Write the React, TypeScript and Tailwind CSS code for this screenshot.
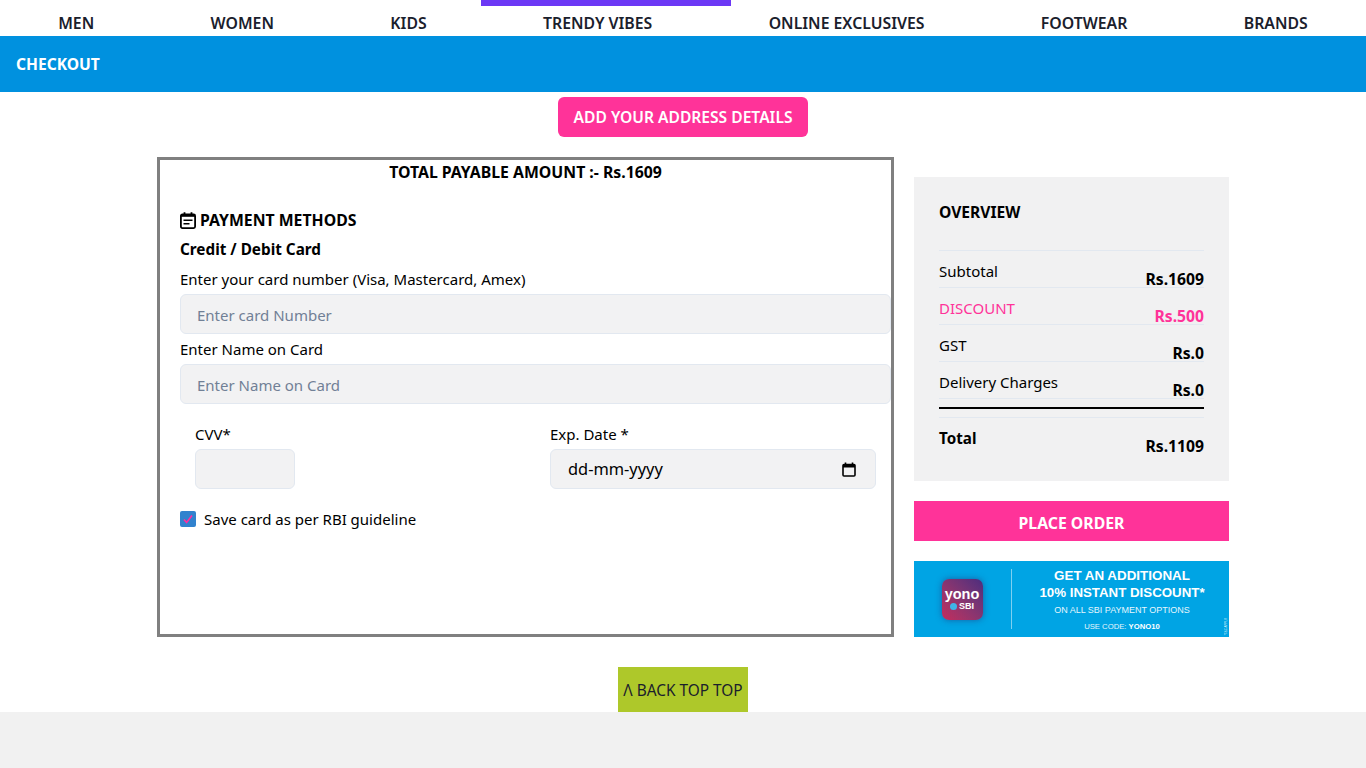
import React from "react";

const NAV = ["MEN", "WOMEN", "KIDS", "TRENDY VIBES", "ONLINE EXCLUSIVES", "FOOTWEAR", "BRANDS"];
const ROWS = [
  { label: "Subtotal", value: "Rs.1609", pink: false },
  { label: "DISCOUNT", value: "Rs.500", pink: true },
  { label: "GST", value: "Rs.0", pink: false },
  { label: "Delivery Charges", value: "Rs.0", pink: false },
];

function PaymentIcon() {
  return (
    <svg width="16" height="17" viewBox="0 0 16 17" fill="none" stroke="#000" strokeWidth="1.8" className="mt-[4px] shrink-0">
      <rect x="0.9" y="2.4" width="14.2" height="13.7" rx="1.5" />
      <path d="M4.5 0.3V3M11.5 0.3V3" />
      <path d="M0.9 3.6H15.1" strokeWidth="2.4" />
      <path d="M3.5 8.3H12.5M3.5 11.7H9.5" strokeWidth="1.6" />
    </svg>
  );
}

function CalendarIcon() {
  return (
    <svg width="14" height="15" viewBox="0 0 14 15" fill="none" className="shrink-0">
      <rect x="1" y="2.5" width="12" height="11.5" rx="1" stroke="#000" strokeWidth="1.6" />
      <rect x="1" y="2.5" width="12" height="3" fill="#000" />
      <path d="M3.5 0.5V3M10.5 0.5V3" stroke="#000" strokeWidth="1.6" />
    </svg>
  );
}

function Banner() {
  return (
    <div className="relative mt-5 flex h-[76px] w-full bg-[#00a4e4] font-['Liberation_Sans',sans-serif] text-white">
      <div className="flex w-[97px] shrink-0 items-center justify-center pr-[1px]">
        <div className="flex h-[41px] w-[41px] flex-col items-center justify-center rounded-[7px] bg-gradient-to-tr from-[#c42a5c] to-[#4c2c7e] shadow-[0_0_6px_rgba(40,40,110,0.55)]">
          <span className="text-[14.5px] font-bold leading-[14px]">yono</span>
          <span className="flex items-center gap-[2px] text-[9px] font-bold leading-[11px]">
            <span className="h-[7px] w-[7px] rounded-full bg-[#3fb4e8]" />
            SBI
          </span>
        </div>
      </div>
      <div className="my-[8px] w-px bg-[#7fd0f0]" />
      <div className="flex flex-1 flex-col items-center pl-[3px] pt-[6px]">
        <span className="text-[13.4px] font-bold leading-[17px]">GET AN ADDITIONAL</span>
        <span className="text-[13.3px] font-bold leading-[17px]">10% INSTANT DISCOUNT*</span>
        <span className="mt-[3px] text-[9px] leading-[12px] text-[#e6f6fd]">ON ALL SBI PAYMENT OPTIONS</span>
        <span className="mt-[6px] text-[7.7px] leading-[10px] text-[#e6f6fd]">
          USE CODE: <b className="text-white">YONO10</b>
        </span>
      </div>
      <span className="absolute bottom-[2px] right-[1px] rotate-180 text-[3px] leading-[4px] text-[#cdeefb] [writing-mode:vertical-rl]">
        *T&amp;C APPLY
      </span>
    </div>
  );
}

export default function App() {
  return (
    <div className="min-h-[768px] bg-white font-['Noto_Sans',sans-serif] text-[15px] leading-6 text-black">
      <div className="relative flex h-9 items-end justify-around pb-[1px] text-[15.8px] text-[#1a202c]">
        <div className="absolute left-[481px] top-0 h-[6px] w-[250px] bg-[#6c38f5]" />
        {NAV.map((n) => (
          <span key={n} className="font-semibold leading-6">{n}</span>
        ))}
      </div>

      <div className="flex h-14 items-center bg-[#0091df] px-4 text-[15.6px] font-bold text-white">CHECKOUT</div>

      <div className="mt-[5px] flex justify-center">
        <button className="flex h-10 w-[250px] items-center justify-center rounded-md bg-[#ff3399] text-[15.6px] font-semibold text-white">
          ADD YOUR ADDRESS DETAILS
        </button>
      </div>

      <div className="mt-5 flex items-start justify-center gap-5 pl-5">
        <div className="h-[480px] w-[737px] border-[3px] border-[#808080] px-5">
          <div className="h-[24px] text-center text-[15.8px] font-bold">TOTAL PAYABLE AMOUNT :- Rs.1609</div>
          <div className="mt-[24px] flex items-start gap-1">
            <PaymentIcon />
            <span className="text-[15.8px] font-bold">PAYMENT METHODS</span>
          </div>
          <div className="mt-[5px] text-[15.3px] font-bold">Credit / Debit Card</div>
          <div className="mt-[6px] h-[27px] leading-[25px]">Enter your card number (Visa, Mastercard, Amex)</div>
          <input
            placeholder="Enter card Number"
            className="block h-10 w-[711px] rounded-md border border-[#e2e8f0] bg-[#f2f2f3] px-4 pt-[2px] text-[15px] outline-none placeholder:text-[#718096]"
          />
          <div className="mt-[3px] h-[27px]">Enter Name on Card</div>
          <input
            placeholder="Enter Name on Card"
            className="block h-10 w-[711px] rounded-md border border-[#e2e8f0] bg-[#f2f2f3] px-4 pt-[2px] text-[15px] outline-none placeholder:text-[#718096]"
          />
          <div className="mt-[18px] flex">
            <div className="ml-[15px] w-[355px] shrink-0">
              <div className="h-[27px]">CVV*</div>
              <input className="block h-10 w-[100px] rounded-md border border-[#e2e8f0] bg-[#f2f2f3] outline-none" />
            </div>
            <div className="w-[326px] shrink-0">
              <div className="h-[27px]">Exp. Date *</div>
              <div className="flex h-10 items-center justify-between rounded-md border border-[#e2e8f0] bg-[#f2f2f3] pl-[17px] pr-[19px] text-[16.4px]">
                <span>dd-mm-yyyy</span>
                <CalendarIcon />
              </div>
            </div>
          </div>
          <div className="mt-[18px] flex items-center gap-2">
            <span className="flex h-4 w-4 items-center justify-center rounded-[2px] bg-[#3182ce]">
              <svg width="10" height="10" viewBox="0 0 10 10" fill="none" stroke="#ff2fa0" strokeWidth="1.7">
                <path d="M1 5.5L3.6 8.5L9 1.5" />
              </svg>
            </span>
            <span>Save card as per RBI guideline</span>
          </div>
        </div>

        <div className="mt-5 w-[315px]">
          <div className="h-[304px] bg-[#f1f1f2] px-[25px] pt-[23px]">
            <div className="h-[50px] text-[15.6px] font-bold">OVERVIEW</div>
            <div className="border-t border-[#e2e8f0]">
              {ROWS.map((r) => (
                <div key={r.label} className="relative h-[37px] border-b border-[#e2e8f0] pt-[8px]">
                  <span className={r.pink ? "text-[#ff3399]" : ""}>{r.label}</span>
                  <span className={`absolute right-0 top-[16px] text-[15.7px] font-bold ${r.pink ? "text-[#ff3399]" : ""}`}>{r.value}</span>
                </div>
              ))}
            </div>
            <div className="mt-2 border-t-2 border-black" />
            <div className="relative mt-2 border-t border-[#e2e8f0] pt-[8px]">
              <span className="text-[15.2px] font-bold">Total</span>
              <span className="absolute right-0 top-[16px] text-[15.7px] font-bold">Rs.1109</span>
            </div>
          </div>
          <button className="mt-5 flex h-10 w-full items-center justify-center bg-[#ff3399] pt-[4px] text-[15.8px] font-bold text-white">PLACE ORDER</button>
          <Banner />
        </div>
      </div>

      <div className="mt-[30px] flex justify-center">
        <div className="flex h-[45px] w-[130px] items-center justify-center bg-[#aec82a] pt-[3px] text-[15.4px] text-[#1a202c]">
          <span className="whitespace-nowrap">Λ BACK TOP TOP</span>
        </div>
      </div>
      <div className="h-14 bg-[#f1f1f1]" />
    </div>
  );
}
